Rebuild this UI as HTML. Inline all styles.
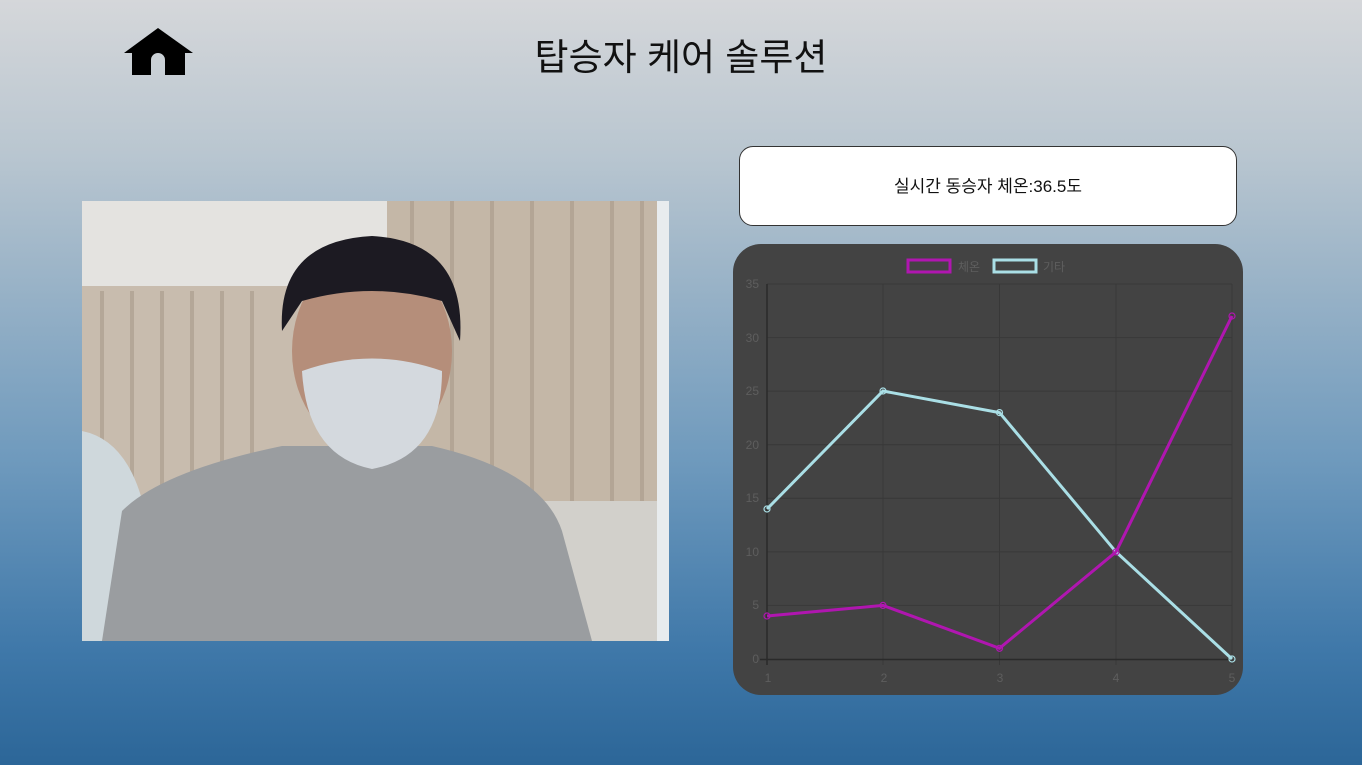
<!DOCTYPE html>
<html><head><meta charset="utf-8"><style>
body{margin:0;width:1362px;height:765px;overflow:hidden;background:linear-gradient(#d5d7da 0%,#b9c6d0 20%,#9db5c8 35%,#6f9abd 60%,#3f78a9 85%,#2c6698 100%);font-family:"Liberation Sans","Noto Sans CJK KR",sans-serif;position:relative}
.t{position:absolute;left:0;width:1362px;top:27px;text-align:center;font-size:37px;color:#111}
.box{position:absolute;left:739px;top:146px;width:496px;height:78px;background:#fff;border:1px solid #333;border-radius:14px;text-align:center;line-height:80px;font-size:17px;color:#111}
.ph{position:absolute;left:82px;top:201px;width:587px;height:440px;overflow:hidden;background:#c9c6c0}
</style></head><body>
<svg style="position:absolute;left:120px;top:25px" width="80" height="55" viewBox="120 25 80 55"><path d="M158 28 L124 53 L132 53 L132 75 L151 75 L151 60 A7 7 0 0 1 165 60 L165 75 L185 75 L185 53 L193 53 Z" fill="#000"/></svg>
<div class="t">탑승자 케어 솔루션</div>
<div class="ph"><svg width="587" height="440">
<rect width="587" height="440" fill="#d2d0cb"/>
<rect x="0" y="0" width="310" height="90" fill="#e4e3e0"/>
<rect x="0" y="85" width="587" height="215" fill="#c8bcae"/>
<rect x="305" y="0" width="282" height="300" fill="#c4b7a7"/>
<g stroke="#a89a8a" stroke-width="4" opacity=".6"><line x1="20" y1="90" x2="20" y2="300"/><line x1="50" y1="90" x2="50" y2="300"/><line x1="80" y1="90" x2="80" y2="300"/><line x1="110" y1="90" x2="110" y2="300"/><line x1="140" y1="90" x2="140" y2="300"/><line x1="170" y1="90" x2="170" y2="300"/><line x1="330" y1="0" x2="330" y2="300"/><line x1="370" y1="0" x2="370" y2="300"/><line x1="410" y1="0" x2="410" y2="300"/><line x1="450" y1="0" x2="450" y2="300"/><line x1="490" y1="0" x2="490" y2="300"/><line x1="530" y1="0" x2="530" y2="300"/><line x1="560" y1="0" x2="560" y2="300"/></g>
<rect x="575" y="0" width="12" height="440" fill="#e8ecee"/>
<path d="M0 230 Q50 240 65 320 L65 440 L0 440Z" fill="#cfd8dc"/>
<path d="M20 440 L40 310 Q80 270 200 245 L350 245 Q460 270 480 330 L510 440Z" fill="#9a9da0"/>
<ellipse cx="290" cy="150" rx="80" ry="100" fill="#b58e7a"/>
<path d="M200 130 Q195 40 290 35 Q385 40 378 140 L360 100 Q290 80 220 100Z" fill="#1c1a22"/>
<path d="M220 170 Q290 145 360 170 Q360 255 290 268 Q225 255 220 170Z" fill="#d4d9de"/>
</svg></div>
<div class="box">실시간 동승자 체온:36.5도</div>
<div style="position:absolute;left:733px;top:244px;width:510px;height:451px;background:#434343;border-radius:28px"></div>
<svg style="position:absolute;left:0;top:0" width="1362" height="765" font-family="Liberation Sans,Noto Sans CJK KR,sans-serif" font-size="12" fill="#5e5e5e">
<g stroke="#383838" stroke-width="1">
<line x1="767" y1="284" x2="1232" y2="284"/><line x1="767" y1="337.6" x2="1232" y2="337.6"/><line x1="767" y1="391.1" x2="1232" y2="391.1"/><line x1="767" y1="444.7" x2="1232" y2="444.7"/><line x1="767" y1="498.3" x2="1232" y2="498.3"/><line x1="767" y1="551.9" x2="1232" y2="551.9"/><line x1="767" y1="605.4" x2="1232" y2="605.4"/>
<line x1="883" y1="284" x2="883" y2="665"/><line x1="999.5" y1="284" x2="999.5" y2="665"/><line x1="1116" y1="284" x2="1116" y2="665"/><line x1="1232" y1="284" x2="1232" y2="665"/>
</g>
<line x1="767" y1="284" x2="767" y2="665" stroke="#2a2a2a" stroke-width="1.5"/>
<line x1="760" y1="659.5" x2="1232" y2="659.5" stroke="#2a2a2a" stroke-width="1.5"/>
<g text-anchor="end"><text x="759" y="288">35</text><text x="759" y="342">30</text><text x="759" y="395">25</text><text x="759" y="449">20</text><text x="759" y="502">15</text><text x="759" y="556">10</text><text x="759" y="609">5</text><text x="759" y="663">0</text></g>
<g text-anchor="middle"><text x="768" y="682">1</text><text x="884" y="682">2</text><text x="1000" y="682">3</text><text x="1116" y="682">4</text><text x="1232" y="682">5</text></g>
<rect x="908" y="260" width="42" height="12" fill="none" stroke="#b016b0" stroke-width="3"/><text x="958" y="271">체온</text>
<rect x="994" y="260" width="42" height="12" fill="none" stroke="#aadfe6" stroke-width="3"/><text x="1043" y="271">기타</text>
<polyline points="767,509 883,391 999.5,412.6 1116,551.9 1232,659" fill="none" stroke="#aadfe6" stroke-width="3"/>
<polyline points="767,616 883,605.4 999.5,648.3 1116,551.9 1232,316" fill="none" stroke="#b016b0" stroke-width="3"/>
<g fill="none" stroke="#aadfe6" stroke-width="1.2"><circle cx="767" cy="509" r="3"/><circle cx="883" cy="391" r="3"/><circle cx="999.5" cy="412.6" r="3"/><circle cx="1232" cy="659" r="3"/></g>
<g fill="none" stroke="#b016b0" stroke-width="1.2"><circle cx="767" cy="616" r="3"/><circle cx="883" cy="605.4" r="3"/><circle cx="999.5" cy="648.3" r="3"/><circle cx="1116" cy="551.9" r="3"/><circle cx="1232" cy="316" r="3"/></g>
</svg>
</body></html>
